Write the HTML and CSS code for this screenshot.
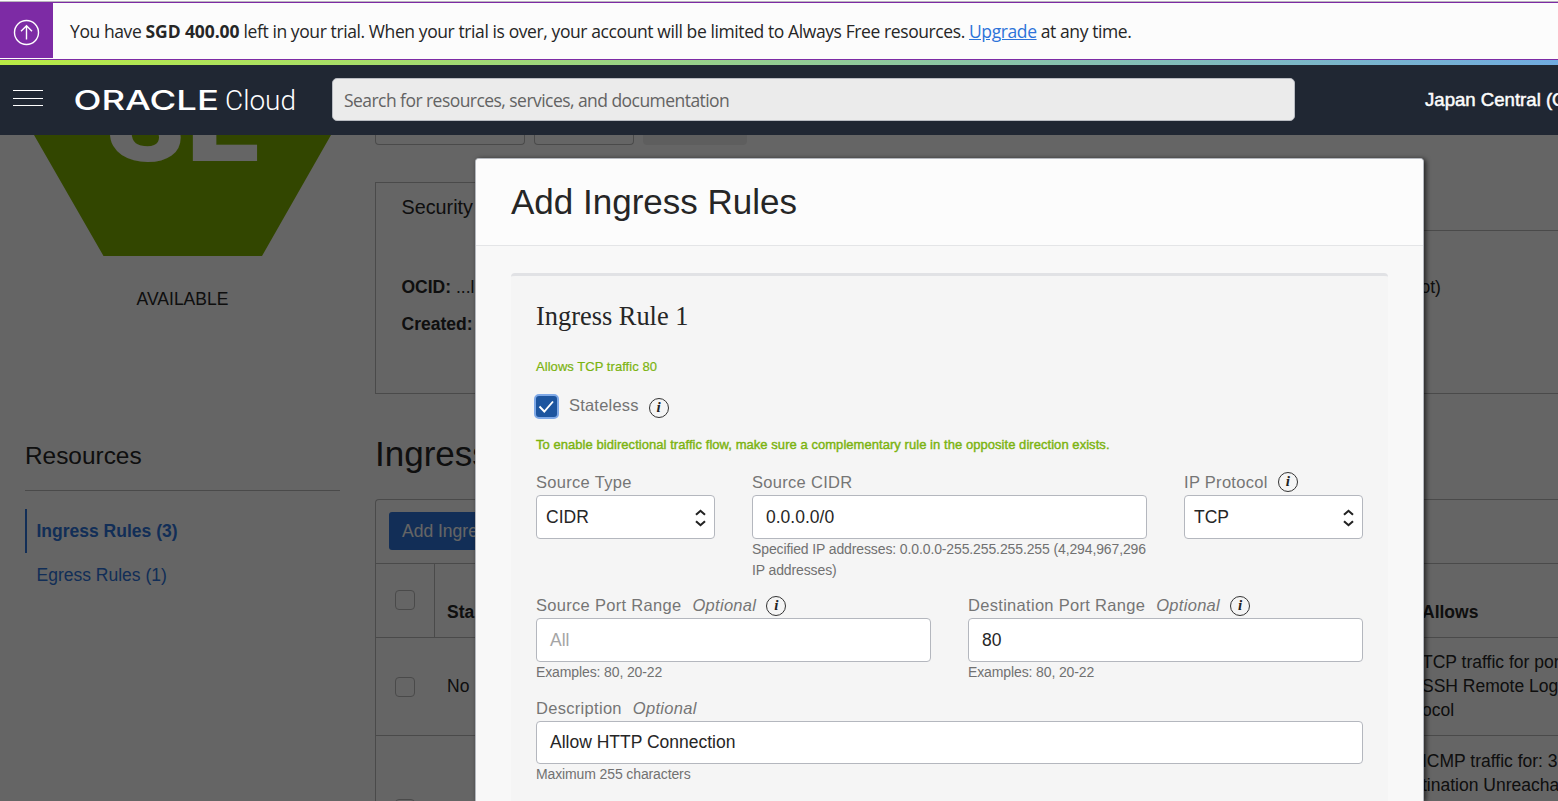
FILE: index.html
```html
<!DOCTYPE html>
<html lang="en">
<head>
<meta charset="utf-8">
<title>Oracle Cloud - Add Ingress Rules</title>
<link rel="stylesheet" href="styles.css">
</head>
<body>
<div class="trial">
  <div class="trial-icon">
    <svg width="27" height="27" viewBox="0 0 27 27" fill="none" stroke="#fff" stroke-width="1.4"><circle cx="13.5" cy="13.5" r="12"/><path d="M13.5 20.5V7M8 12.3l5.5-5.6 5.5 5.6"/></svg>
  </div>
  <p class="trial-text">You have <b>SGD 400.00</b> left in your trial. When your trial is over, your account will be limited to Always Free resources. <a>Upgrade</a> at any time.</p>
</div>
<div class="rainbow"></div>
<header class="nav">
  <svg class="burger" width="30" height="17" viewBox="0 0 30 17" fill="#fff"><path d="M0 0h30v1H0zM0 8h30v1H0zM0 15h30v1H0z"/></svg>
  <svg class="logo" width="224" height="30" viewBox="0 0 224 30" fill="#fff"><text class="logo-oracle" x="-1.500" y="24.500" textLength="145.500" lengthAdjust="spacingAndGlyphs">ORACLE</text><text class="logo-cloud" x="150" y="24.500" textLength="71" lengthAdjust="spacingAndGlyphs">Cloud</text></svg>
  <div class="search">Search for resources, services, and documentation</div>
  <div class="region">Japan Central (Osaka)</div>
</header>
<main class="page">
  <aside class="side">
    <svg class="hex" width="375" height="121" viewBox="0 0 375 121"><path fill="#7daf00" d="M-43-135H408L331 0 262 121H103.500L34 0z"/><text class="hex-text" x="106" y="26" textLength="79" lengthAdjust="spacingAndGlyphs">S</text><text class="hex-text" x="185.500" y="26" textLength="74" lengthAdjust="spacingAndGlyphs">L</text></svg>
    <div class="state">AVAILABLE</div>
    <h3 class="res-title">Resources</h3>
    <a class="res-link active">Ingress Rules (3)</a>
    <a class="res-link">Egress Rules (1)</a>
  </aside>
  <section class="content">
    <div class="actions"><i class="act a1"></i><i class="act a2"></i><i class="act a3"></i></div>
    <div class="tabs"><div class="tab">Security</div><div class="tab-rest"></div></div>
    <div class="info">
      <div class="info-line"><span><b>OCID:</b> ...l</span><span class="info-right">ot)</span></div>
      <div class="info-line"><b>Created:</b></div>
    </div>
    <h2 class="list-title">Ingress Rules</h2>
    <div class="table">
      <div class="toolbar"><span class="add-btn">Add Ingress Rules</span></div>
      <div class="row head"><div class="check"><i></i></div><div class="c1">Sta</div><div class="c2">Allows</div></div>
      <div class="row"><div class="check"><i></i></div><div class="c1">No</div><div class="c2">TCP traffic for ports: 22<br>SSH Remote Login Prot<br>ocol</div></div>
      <div class="row last"><div class="check"><i></i></div><div class="c1"></div><div class="c2">ICMP traffic for: 3, 4 Des<br>tination Unreachable</div></div>
    </div>
  </section>
  <div class="shade"></div>
</main>
<div class="modal">
  <div class="modal-head">Add Ingress Rules</div>
  <div class="panel">
    <h3 class="rule-title">Ingress Rule 1</h3>
    <p class="green">Allows TCP traffic 80</p>
    <div class="stateless">
      <span class="cb"><svg width="21" height="21" viewBox="0 0 21 21" fill="none" stroke="#fff" stroke-width="1.9"><path d="M3.500 10.500l4.800 5 8.700-10"/></svg></span>
      <span class="cb-label">Stateless</span>
      <span class="tip">i</span>
    </div>
    <p class="green strong">To enable bidirectional traffic flow, make sure a complementary rule in the opposite direction exists.</p>
    <div class="fields three">
      <div class="field"><div class="label">Source Type</div><div class="input select">CIDR<svg width="13" height="20" viewBox="0 0 13 20" fill="none" stroke="#222" stroke-width="2.100"><path d="M2 6.800L6.500 2.800l4.500 4M2 13.200l4.500 4 4.500-4"/></svg></div></div>
      <div class="field"><div class="label">Source CIDR</div><div class="input">0.0.0.0/0</div><div class="hint">Specified IP addresses: 0.0.0.0-255.255.255.255 (4,294,967,296<br>IP addresses)</div></div>
      <div class="field"><div class="label">IP Protocol<span class="tip">i</span></div><div class="input select">TCP<svg width="13" height="20" viewBox="0 0 13 20" fill="none" stroke="#222" stroke-width="2.100"><path d="M2 6.800L6.500 2.800l4.500 4M2 13.200l4.500 4 4.500-4"/></svg></div></div>
    </div>
    <div class="fields two">
      <div class="field"><div class="label">Source Port Range<em>Optional</em><span class="tip">i</span></div><div class="input ph">All</div><div class="hint">Examples: 80, 20-22</div></div>
      <div class="field"><div class="label">Destination Port Range<em>Optional</em><span class="tip">i</span></div><div class="input">80</div><div class="hint">Examples: 80, 20-22</div></div>
    </div>
    <div class="fields">
      <div class="field"><div class="label">Description<em>Optional</em></div><div class="input short">Allow HTTP Connection</div><div class="hint">Maximum 255 characters</div></div>
    </div>
  </div>
</div>
</body>
</html>
```
FILE: styles.css
```css
* { box-sizing: border-box; margin: 0; padding: 0; }
body { width: 1558px; height: 801px; overflow: hidden; background: #fcfcfc; color: #262626; font: 17.5px/24px "Liberation Sans", Arial, sans-serif; display: flex; flex-direction: column; }

/* trial banner */
.trial { height: 60px; padding-top: 2px; flex: none; display: flex; border-bottom: 1px solid #7d2ba5; background: linear-gradient(#fcfcfc 0 1px, #b9b6bc 1px 2px, #7d2ba5 2px 3px, #fcfcfc 3px); }
.trial-icon { width: 53px; height: 56px; background: #7d2ba5; display: flex; align-items: center; justify-content: center; padding-top: 5px; }
.trial-text { margin-left: 17px; line-height: 58px; font-family: "Open Sans", "Noto Sans", sans-serif; font-size: 17.5px; letter-spacing: -0.405px; white-space: nowrap; }
.trial-text b { letter-spacing: -0.1px; }
.trial-text a { color: #2d73d9; text-decoration: underline; }
.rainbow { height: 5px; flex: none; background: linear-gradient(90deg, #b9ea45, #a1d974 30%, #84bfb5 72%, #70abe0); }

/* top navigation */
.nav { height: 70px; flex: none; background: #202733; display: flex; align-items: center; padding-left: 13px; color: #fcfcfc; overflow: hidden; }
.burger { flex: none; margin-top: -3px; }
.logo { flex: none; margin-left: 32px; overflow: visible; }
.logo-oracle { font: 500 27px Inter, sans-serif; }
.logo-cloud { font: 300 28px Roboto, sans-serif; }
.search { width: 963px; height: 43px; flex: none; margin: -1px 0 0 33px; background: #ebebeb; border: 1px solid #b9bcc2; border-radius: 5px; padding-left: 11px; color: #636363; font: 17.5px/43px "Open Sans", "Noto Sans", sans-serif; letter-spacing: -0.55px; }
.region { flex: none; margin-left: 130px; font-size: 18.6px; white-space: nowrap; -webkit-text-stroke: 0.5px #fcfcfc; }

/* page behind the dialog */
.page { flex: 1; min-height: 0; position: relative; display: grid; grid-template-columns: 375px 1fr; grid-template-rows: 666px; overflow: hidden; }
.shade { position: absolute; inset: 0; background: rgba(0, 0, 0, 0.6); }
.side { display: flex; flex-direction: column; }
.hex { flex: none; overflow: hidden; }
.hex-text { font: 900 122px Roboto, sans-serif; fill: #fcfcfc; }
.state { width: 365px; text-align: center; margin-top: 31px; }
.res-title { margin: 129px 35px 18px 25px; height: 51px; border-bottom: 1px solid #b9b9b9; font-weight: 400; font-size: 24.4px; line-height: 32px; }
.res-link { color: #2d73d9; height: 44px; line-height: 44px; margin-left: 25px; padding-left: 11.500px; }
.res-link.active { font-weight: 700; border-left: 2px solid #2d73d9; padding-left: 9.500px; }

.content { min-width: 0; overflow: hidden; white-space: nowrap; }
.actions { display: flex; gap: 9px; height: 10px; }
.act { height: 10px; border: 1px solid #b9b9b9; border-top: 0; border-radius: 0 0 4px 4px; }
.a1 { width: 150px; }
.a2 { width: 100px; }
.a3 { width: 104px; background: #ebebeb; border: 0; }
.tabs { display: flex; height: 49px; margin-top: 37px; }
.tab { width: 160px; border: 1px solid #b9b9b9; border-bottom: 0; padding-left: 25.500px; font-size: 19.8px; line-height: 49px; }
.tab-rest { flex: 1; border-bottom: 1px solid #b9b9b9; }
.info { height: 163px; border: 1px solid #b9b9b9; border-width: 0 0 1px 1px; padding: 38px 0 0 25.500px; }
.info-line { height: 37px; line-height: 36px; display: flex; }
.info-line > span:first-child { width: 1019px; flex: none; }
.list-title { font-weight: 400; font-size: 35px; line-height: 44px; height: 105px; padding-top: 38px; }
.table { height: 302px; border: 1px solid #b9b9b9; border-width: 1px 0 0 1px; border-radius: 4px 0 0 0; overflow: hidden; }
.toolbar { height: 64px; padding: 12px 0 0 13px; border-bottom: 1px solid #b9b9b9; }
.add-btn { display: inline-block; height: 38px; line-height: 38px; padding: 0 13px; border-radius: 3px; background: #2d73d9; color: #fcfcfc; }
.row { display: grid; grid-template-columns: 59px 987px 1fr; grid-template-rows: 100%; height: 98px; border-bottom: 1px solid #b9b9b9; }
.row.head { height: 74px; font-weight: 700; line-height: 24px; }
.head .check { border-right: 1px solid #b9b9b9; padding-top: 26px; }
.check { padding: 39px 0 0 19px; }
.last .check { padding-top: 63px; }
.check i { display: block; width: 20px; height: 20px; border: 1px solid #b9b9b9; border-radius: 4px; }
.c1 { padding-left: 12px; padding-top: 36px; }
.c2 { padding-top: 12px; }
.last .c2 { padding-top: 13px; }
.head .c1, .head .c2 { padding-top: 36px; }

/* dialog */
.modal { position: absolute; left: 475px; top: 158px; width: 949px; height: 643px; display: flex; flex-direction: column; background: #f8f8f8; border: 1px solid #b4b7bd; border-bottom: 0; border-radius: 4px 4px 0 0; box-shadow: 2px 1px 5px rgba(0, 0, 0, 0.65); overflow: hidden; }
.modal-head { height: 87px; flex: none; background: #fcfcfc; border-bottom: 1px solid #e4e5e7; padding-left: 35px; font-size: 35px; line-height: 86px; }
.panel { margin: 27px 35px 0; flex: 1; min-height: 0; border-top: 3px solid #e1e2e5; border-radius: 4px 4px 0 0; background: #f5f5f5; padding: 20px 25px 0; }
.rule-title { font: 400 26.4px/40px "Liberation Serif", "Times New Roman", serif; }
.green { margin-top: 21px; font-size: 13px; line-height: 20px; letter-spacing: 0.05px; color: #7bb30f; -webkit-text-stroke: 0.2px #7bb30f; white-space: nowrap; }
.green.strong { margin-top: 15px; -webkit-text-stroke-width: 0.4px; }
.stateless { height: 26px; margin-top: 17px; display: flex; align-items: center; }
.cb { width: 25px; height: 25px; margin: -1px 0 0 -2px; border: 2px solid #7ea8e6; border-radius: 5px; background: #1d559f; }
.cb svg { display: block; }
.cb-label { margin: -4px 0 0 10px; color: #737373; font-size: 16.5px; letter-spacing: 0.2px; }
.tip { width: 20px; height: 20px; flex: none; margin-left: 10px; border: 1.500px solid #333; border-radius: 50%; color: #222; font: italic 700 15px/17px "Liberation Serif", serif; letter-spacing: 0; text-align: center; }
.stateless .tip, .two .tip { margin-top: 2px; }
.fields { display: grid; column-gap: 37px; margin-top: 12px; }
.three { grid-template-columns: 179px 395px 179px; margin-top: 14px; }
.two { grid-template-columns: 395px 395px; margin-top: 11px; }
.label { height: 26px; line-height: 26px; display: flex; align-items: center; font-size: 16.5px; letter-spacing: 0.3px; color: #757575; white-space: nowrap; }
.label em { margin-left: 11px; }
.input { height: 44px; border: 1px solid #b4b7be; border-radius: 4px; background: #fff; line-height: 42px; padding-left: 13px; white-space: nowrap; }
.input.short { height: 43px; line-height: 41px; }
.select { display: flex; align-items: center; justify-content: space-between; padding: 0 7px 0 9px; }
.select svg { margin-top: 1px; }
.ph { color: #a5a5a5; }
.hint { font-size: 14px; line-height: 21px; letter-spacing: -0.12px; color: #717171; white-space: nowrap; }
```
